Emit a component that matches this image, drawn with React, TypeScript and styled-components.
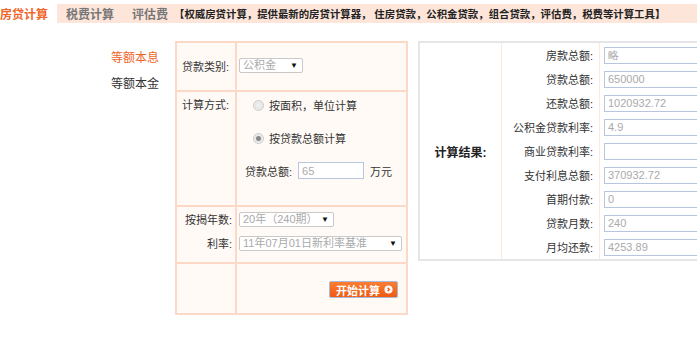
import React from 'react'
import styled, { createGlobalStyle } from 'styled-components'

const GlobalStyle = createGlobalStyle`
  body {
    margin: 0;
    background: #fff;
    font-family: "Liberation Sans", "Noto Sans CJK SC", sans-serif;
    font-size: 11px;
    color: #333;
  }
`

const Page = styled.div`
  width: 697px;
  height: 342px;
  overflow: hidden;
  padding-top: 4px;
  box-sizing: border-box;
`

const TopBar = styled.div`
  display: flex;
  align-items: center;
  height: 19px;
  background: #fde5da;
  white-space: nowrap;
`

const Tab = styled.div<{ active?: boolean }>`
  height: 100%;
  display: flex;
  align-items: center;
  padding: 0 ${({ active }) => (active ? '9px 0 0' : '9px')};
  background: ${({ active }) => (active ? '#fff' : 'transparent')};
  color: ${({ active }) => (active ? '#f0652a' : '#777')};
  font-size: 12px;
  font-weight: bold;
`

const Slogan = styled.div`
  margin-left: -3px;
  font-size: 10.4px;
  font-weight: bold;
  color: #222;
`

const Main = styled.div`
  display: flex;
  align-items: flex-start;
  margin-top: 18px;

  & > * {
    flex-shrink: 0;
  }
`

const SideMenu = styled.div`
  width: 64px;
  padding: 9px 0 0 111px;
  display: flex;
  flex-direction: column;
  gap: 10px;
`

const SideItem = styled.div<{ active?: boolean }>`
  font-size: 12px;
  line-height: 16px;
  color: ${({ active }) => (active ? '#f0652a' : '#333')};
`

const FormTable = styled.table`
  width: 233px;
  border-collapse: collapse;
  background: #fffaf6;
  border: 2px solid #fbd9c6;

  td {
    border: 2px solid #fbd9c6;
    padding: 0;
    vertical-align: top;
  }
`

const LabelCell = styled.td<{ h: number }>`
  width: 58px;
  height: ${({ h }) => h}px;
`

const Label = styled.div<{ right?: boolean }>`
  font-size: 11px;
  line-height: 17px;
  color: #333;
  text-align: ${({ right }) => (right ? 'right' : 'left')};
  padding: 0 ${({ right }) => (right ? '3px' : '0')} 0 ${({ right }) => (right ? '0' : '5px')};
`

const CellBody = styled.div<{ pt: number }>`
  padding: ${({ pt }) => pt}px 0 0 2px;
  display: flex;
  flex-direction: column;
`

const SelectBox = styled.div<{ w: number }>`
  width: ${({ w }) => w}px;
  height: 15px;
  box-sizing: border-box;
  border: 1px solid #c9c9c9;
  border-radius: 2px;
  background: #fff;
  color: #aaa;
  font-size: 11px;
  line-height: 13px;
  padding: 0 4px 0 3px;
  display: flex;
  justify-content: space-between;
  align-items: center;
`

const Arrow = styled.span`
  color: #111;
  font-size: 8px;
`

const RadioRow = styled.div<{ mt: number }>`
  display: flex;
  align-items: center;
  margin: ${({ mt }) => mt}px 0 0 14px;
  font-size: 11px;
  color: #333;
`

const Radio = styled.span<{ checked?: boolean }>`
  width: 9px;
  height: 9px;
  border-radius: 50%;
  border: 1px solid #ccc;
  background: radial-gradient(circle, ${({ checked }) => (checked ? '#888 0 2px' : '#eee 0 2px')}, #e6e6e6 3px, #f7f7f7);
  margin-right: 5px;
`

const AmountRow = styled.div`
  display: flex;
  align-items: center;
  margin: 16px 0 0 6px;
  font-size: 11px;
`

const TextInput = styled.input<{ w: number }>`
  width: ${({ w }) => w}px;
  height: 17px;
  box-sizing: border-box;
  border: 1px solid #b7c6dc;
  padding: 0 3px;
  margin: 0;
  font-family: "Liberation Sans", sans-serif;
  font-size: 11px;
  color: #aaa;
  background: #fff;
  outline: none;
`

const Unit = styled.span`
  margin-left: 6px;
`

const RowGap = styled.div<{ h: number }>`
  height: ${({ h }) => h}px;
`

const ButtonCell = styled.div`
  height: 49px;
  display: flex;
  justify-content: flex-end;
  align-items: flex-start;
  padding: 17px 8px 0 0;
  box-sizing: border-box;
`

const StartButton = styled.button`
  display: flex;
  align-items: center;
  gap: 4px;
  height: 17px;
  padding: 0 4px 0 6px;
  border: 1px solid #a9b9d6;
  border-radius: 2px;
  background: linear-gradient(#fb7d34, #ef5a12);
  color: #fff;
  font-family: "Noto Sans CJK SC", sans-serif;
  font-size: 11px;
  font-weight: bold;
`

const ResultTable = styled.table`
  margin-left: 10px;
  border-collapse: collapse;
  border: 2px solid #e6e6e6;
  width: 300px;
  table-layout: fixed;

  td {
    padding: 0;
  }
`

const ResultTitle = styled.td`
  width: 81px;
  border-right: 1px solid #fde9dc;
  text-align: center;
  font-size: 12px;
  font-weight: bold;
  color: #222;
`

const ResultLabelCell = styled.td`
  width: 91px;
  padding-right: 6px !important;
  border-right: 1px solid #fde9dc;
  text-align: right;
  height: 24px;
  font-size: 11px;
  color: #333;
  white-space: nowrap;
`

const ResultValueCell = styled.td`
  padding-left: 4px !important;
`

const Go = () => (
  <svg width="9" height="9" viewBox="0 0 10 10">
    <circle cx="5" cy="5" r="4.5" fill="#fff" />
    <path d="M4 3 L6 5 L4 7" stroke="#ef5a12" strokeWidth="1.4" fill="none" />
  </svg>
)

const results: [string, string][] = [
  ['房款总额:', '略'],
  ['贷款总额:', '650000'],
  ['还款总额:', '1020932.72'],
  ['公积金贷款利率:', '4.9'],
  ['商业贷款利率:', ''],
  ['支付利息总额:', '370932.72'],
  ['首期付款:', '0'],
  ['贷款月数:', '240'],
  ['月均还款:', '4253.89'],
]

export default function App() {
  return (
    <Page>
      <GlobalStyle />
      <TopBar>
        <Tab active>房贷计算</Tab>
        <Tab>税费计算</Tab>
        <Tab>评估费</Tab>
        <Slogan>【权威房贷计算，提供最新的房贷计算器， 住房贷款，公积金贷款，组合贷款，评估费，税费等计算工具】</Slogan>
      </TopBar>
      <Main>
        <SideMenu>
          <SideItem active>等额本息</SideItem>
          <SideItem>等额本金</SideItem>
        </SideMenu>
        <FormTable>
          <tbody>
            <tr>
              <LabelCell h={47}>
                <Label style={{ paddingTop: 16 }}>贷款类别:</Label>
              </LabelCell>
              <td>
                <CellBody pt={15}>
                  <SelectBox w={64}>公积金<Arrow>▼</Arrow></SelectBox>
                </CellBody>
              </td>
            </tr>
            <tr>
              <LabelCell h={113}>
                <Label style={{ paddingTop: 5 }}>计算方式:</Label>
              </LabelCell>
              <td>
                <CellBody pt={5}>
                  <RadioRow mt={0}><Radio />按面积，单位计算</RadioRow>
                  <RadioRow mt={17}><Radio checked />按贷款总额计算</RadioRow>
                  <AmountRow>
                    贷款总额:
                    <TextInput w={66} readOnly value="65" style={{ marginLeft: 6 }} />
                    <Unit>万元</Unit>
                  </AmountRow>
                </CellBody>
              </td>
            </tr>
            <tr>
              <LabelCell h={55}>
                <Label right style={{ paddingTop: 5 }}>按揭年数:</Label>
                <Label right style={{ paddingTop: 7 }}>利率:</Label>
              </LabelCell>
              <td>
                <CellBody pt={5}>
                  <SelectBox w={95}>20年（240期）<Arrow>▼</Arrow></SelectBox>
                  <RowGap h={9} />
                  <SelectBox w={163}>11年07月01日新利率基准<Arrow>▼</Arrow></SelectBox>
                </CellBody>
              </td>
            </tr>
            <tr>
              <LabelCell h={49} />
              <td>
                <ButtonCell>
                  <StartButton>开始计算<Go /></StartButton>
                </ButtonCell>
              </td>
            </tr>
          </tbody>
        </FormTable>
        <ResultTable>
          <tbody>
            {results.map(([label, value], i) => (
              <tr key={label}>
                {i === 0 && <ResultTitle rowSpan={results.length}>计算结果:</ResultTitle>}
                <ResultLabelCell>{label}</ResultLabelCell>
                <ResultValueCell>
                  <TextInput w={110} readOnly value={value} />
                </ResultValueCell>
              </tr>
            ))}
          </tbody>
        </ResultTable>
      </Main>
    </Page>
  )
}
